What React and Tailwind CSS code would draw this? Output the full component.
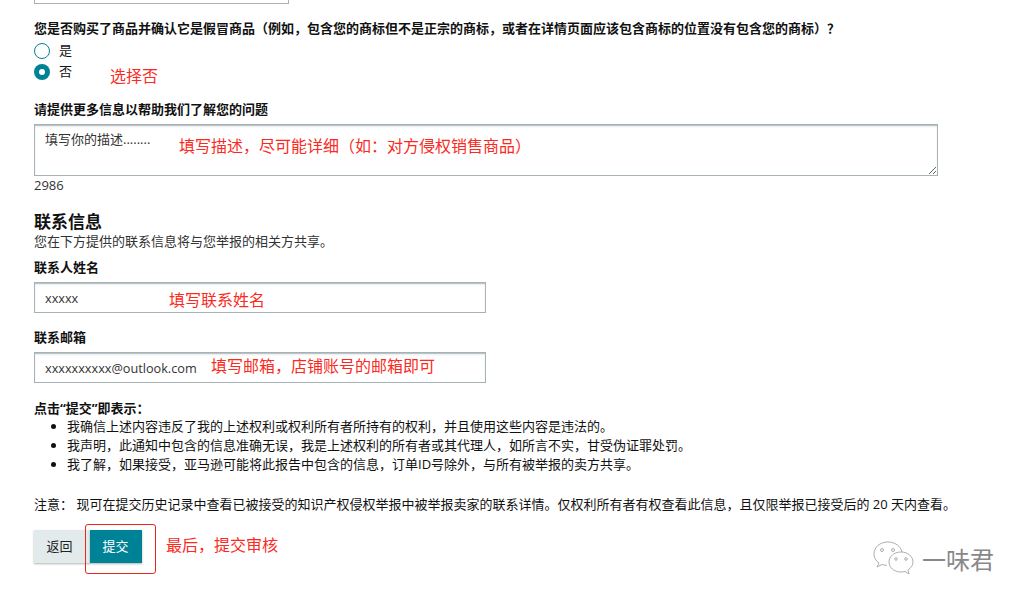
import React from 'react';

const FONT = "font-['Open_Sans','Noto_Sans_CJK_SC',sans-serif] [text-spacing-trim:space-all]";

// red annotation text laid over the form
const Note = ({ className, children }) => (
  <span className={`absolute whitespace-nowrap text-[16px] leading-[20px] text-[#fb2a1e] ${className}`}>
    {children}
  </span>
);

const Radio = ({ checked, label }) => (
  <div className="flex h-[20px] items-center">
    {checked ? (
      <span className="flex h-4 w-4 items-center justify-center rounded-full bg-[#008296]">
        <span className="h-[6px] w-[6px] rounded-full bg-white" />
      </span>
    ) : (
      <span className="h-4 w-4 rounded-full border border-[#008296] bg-white" />
    )}
    <span className="ml-[9px] text-[13px] text-[#111]">{label}</span>
  </div>
);

const TextField = ({ label, value, note, noteClass }) => (
  <div>
    <div className="h-[20px] text-[13px] font-bold leading-[18px] text-[#111]">{label}</div>
    <div className="relative mt-[4px] h-[31px] w-[452px]">
      <input
        readOnly
        value={value}
        className="h-full w-full border border-[#a6b2b5] px-[10px] text-[12.7px] text-[#333] shadow-[inset_0_1px_0_#b9c4c6,inset_0_2px_2px_rgba(0,0,0,0.08)] outline-none"
      />
      <Note className={noteClass}>{note}</Note>
    </div>
  </div>
);

export default function App() {
  return (
    <div className={`${FONT} relative h-[606px] w-[1029px] overflow-hidden bg-white pl-[34px] text-[13px] text-[#111]`}>
      {/* bottom edge of the field above */}
      <div className="h-[4px] w-[255px] border border-t-0 border-[#a6b2b5]" />

      <div className="mt-[16px] h-[20px] whitespace-nowrap font-bold leading-[16px]">
        您是否购买了商品并确认它是假冒商品（例如，包含您的商标但不是正宗的商标，或者在详情页面应该包含商标的位置没有包含您的商标）？
      </div>

      <div className="relative mt-[1px] flex flex-col gap-[1px]">
        <Radio label="是" />
        <Radio checked label="否" />
        <Note className="left-[76px] top-[25px]">选择否</Note>
      </div>

      <div className="mt-[19px] h-[20px] font-bold leading-[16px]">请提供更多信息以帮助我们了解您的问题</div>

      <div className="relative mt-[3px] h-[52px] w-[904px]">
        <textarea
          readOnly
          value="填写你的描述........"
          className="block h-full w-full resize-y border border-[#a6b2b5] px-[10px] py-[4px] text-[13px] leading-[20px] text-[#333] shadow-[inset_0_1px_0_#b9c4c6,inset_0_2px_2px_rgba(0,0,0,0.08)] outline-none"
        />
        <Note className="left-[145px] top-[12px]">填写描述，尽可能详细（如：对方侵权销售商品）</Note>
      </div>

      <div className="mt-[1px] h-[18px] leading-[16px] text-[#333]">2986</div>

      <h2 className="mt-[18px] h-[22px] text-[17px] font-bold leading-[18px]">联系信息</h2>
      <p className="h-[16px] leading-[12px] text-[#333]">您在下方提供的联系信息将与您举报的相关方共享。</p>

      <div className="mt-[7px] flex flex-col gap-[15px]">
        <TextField label="联系人姓名" value="xxxxx" note="填写联系姓名" noteClass="left-[135px] top-[8px]" />
        <TextField label="联系邮箱" value="xxxxxxxxxx@outlook.com" note="填写邮箱，店铺账号的邮箱即可" noteClass="left-[177px] top-[4px]" />
      </div>

      <div className="mt-[15px] h-[19px] font-bold leading-[20px]">点击“提交”即表示：</div>
      <ul className="list-disc pl-[33px] leading-[19px]">
        <li>我确信上述内容违反了我的上述权利或权利所有者所持有的权利，并且使用这些内容是违法的。</li>
        <li>我声明，此通知中包含的信息准确无误，我是上述权利的所有者或其代理人，如所言不实，甘受伪证罪处罚。</li>
        <li>我了解，如果接受，亚马逊可能将此报告中包含的信息，订单ID号除外，与所有被举报的卖方共享。</li>
      </ul>

      <p className="mt-[20px] whitespace-nowrap leading-[20px]">
        注意： 现可在提交历史记录中查看已被接受的知识产权侵权举报中被举报卖家的联系详情。仅权利所有者有权查看此信息，且仅限举报已接受后的 20 天内查看。
      </p>

      <div className="relative mt-[16px] flex h-[33px] items-stretch">
        <button className="w-[56px] bg-[#e3eaeb] pr-[5px] text-[#222] shadow-[0_1px_2px_rgba(0,0,0,0.3)]">返回</button>
        <button className="z-10 w-[52px] bg-[#008296] pr-[1px] text-white shadow-[0_1px_2px_rgba(0,0,0,0.3)]">提交</button>
        <div className="absolute left-[51px] top-[-6px] h-[50px] w-[71px] rounded-[3px] border border-[#e8281e]" />
        <Note className="left-[132px] top-[5px]">最后，提交审核</Note>
      </div>

      {/* watermark */}
      <div className="absolute left-[873px] top-[541px] flex items-center">
        <svg width="42" height="36" viewBox="0 0 42 36" fill="none" stroke="#9a9a9a" strokeWidth="0.8">
          <path d="M15 1C7 1 1 6 1 13c0 4 2 7 5 9l-2 4 5-2.5c1.500.5 3 .8 5 .8" />
          <path d="M28 11c-7 0-12 4.500-12 10s5 10 12 10c1.500 0 3-.2 4-.6l4 2.600-1-4c3-2 5-5 5-8 0-5.500-5-10-12-10z" fill="#fff" />
          <path d="M15 1c7 0 13 4.500 14 10" />
          <circle cx="9" cy="9" r="1.500" />
          <circle cx="20" cy="9" r="1.500" />
          <circle cx="23" cy="18" r="1.300" />
          <circle cx="33" cy="18" r="1.300" />
        </svg>
        <span className="ml-[7px] mt-[2px] text-[24px] leading-[30px] text-[#888]">一味君</span>
      </div>
    </div>
  );
}
